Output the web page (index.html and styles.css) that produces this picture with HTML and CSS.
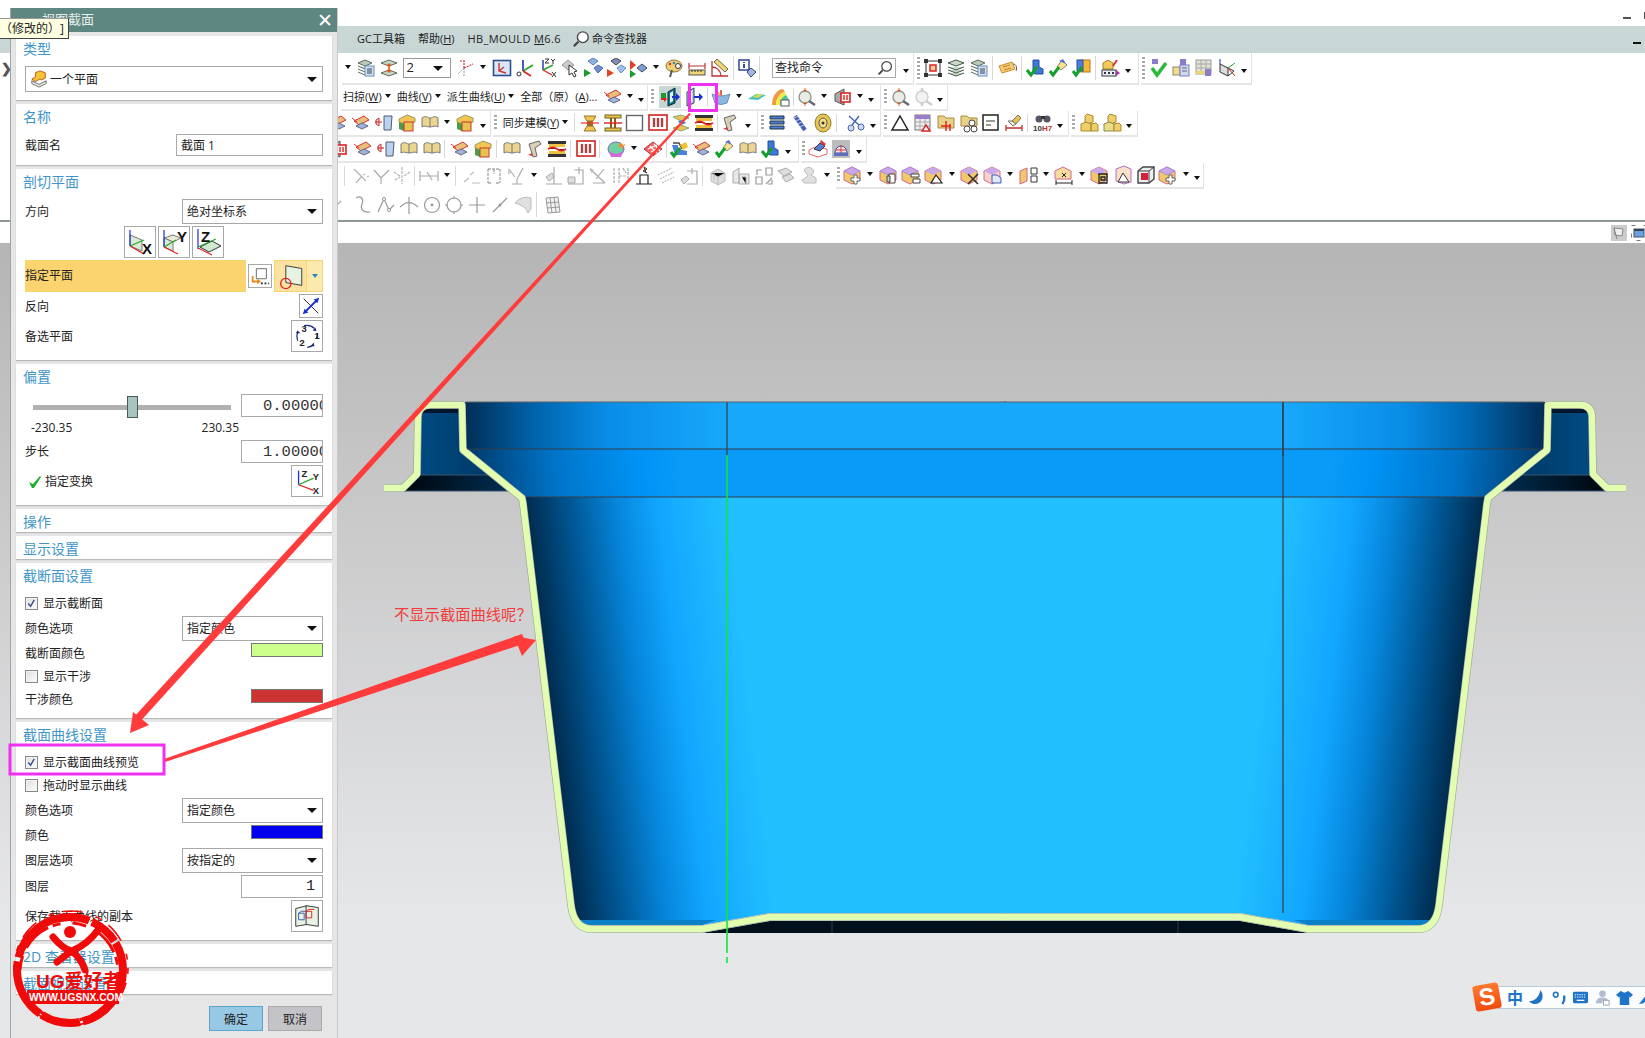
FILE: index.html
```html
<!DOCTYPE html>
<html lang="zh">
<head>
<meta charset="utf-8">
<title>视图截面</title>
<link rel="stylesheet" href="styles.css">
</head>
<body>
<svg class="defs" width="0" height="0">
<symbol id="ltab" viewBox="0 0 20 20"><path fill="#bccbb6" stroke="#5a6b60" d="M2 5l7-3 7 3-7 3zM2 8l7 3 2-1M2 11l7 3M2 14l7 3"/><rect x="9" y="8" width="9" height="10" fill="#d3e2f6" stroke="#6c8cb4"/><path stroke="#345" d="M11 11h5M11 13h5M11 15h5"/></symbol>
<symbol id="lyr" viewBox="0 0 20 20"><path fill="#c5d8c0" stroke="#5a6b60" d="M2 5l8-3 8 3-8 3zM2 15l8-3 8 3-8 3z"/><path stroke="#e2571e" stroke-width="1.5" fill="none" d="M10 6v8M8 8l2-2 2 2M8 12l2 2 2-2"/></symbol>
<symbol id="csd" viewBox="0 0 20 20"><path fill="none" stroke="#999" stroke-dasharray="2 1" d="M8 10v8M8 10l-6 6"/><path fill="none" stroke="#c33" stroke-dasharray="2 1" stroke-width="1.2" d="M8 10V3M8 10l9-4M4 3h5"/></symbol>
<symbol id="csf" viewBox="0 0 20 20"><rect x="1.5" y="2.5" width="17" height="15" fill="#dbe7f6" stroke="#2a4f8f" stroke-width="1.6"/><path fill="none" stroke="#c33" stroke-width="1.4" d="M7 5v8l7 2M7 13l5-4"/></symbol>
<symbol id="csg" viewBox="0 0 20 20"><path fill="none" stroke-width="1.6" stroke="#1a2fb0" d="M8 13V2"/><path fill="none" stroke-width="1.6" stroke="#2aa52a" d="M8 13l10-6"/><path fill="none" stroke-width="1.6" stroke="#d22" d="M8 13l8 5"/><circle cx="4" cy="16" r="2" fill="none" stroke="#333"/></symbol>
<symbol id="csx" viewBox="0 0 20 20"><path fill="none" stroke-width="1.4" stroke="#1a2fb0" d="M6 12V2"/><path fill="none" stroke-width="1.4" stroke="#2aa52a" d="M6 12l10-5"/><path fill="none" stroke-width="1.4" stroke="#d22" d="M6 12l9 5"/><path fill="none" stroke="#333" d="M8 1h4l-4 4h4M14 1l2 2 2-2M16 3v3M15 14l4 5M19 14l-4 5"/></symbol>
<symbol id="cur" viewBox="0 0 20 20"><path fill="#c8c8c8" stroke="#999" d="M2 7l6-5 6 5-6 5z"/><path fill="#fff" stroke="#333" d="M9 7l8 6-3 1 2 4-2 1-2-4-3 2z"/></symbol>
<symbol id="dg" viewBox="0 0 20 20"><path fill="#8fb0e0" stroke="#5b7fb8" d="M5 3l5-3 5 3-5 4z"/><path fill="#6f8fcc" stroke="#4b6ea8" d="M11 10l4-3 5 3-5 5z"/><path fill="#1f9b2e" d="M1 11l7 4-7 4z"/></symbol>
<symbol id="dr" viewBox="0 0 20 20"><path fill="#7f8fc0" stroke="#444" d="M5 3l5-3 5 3-5 4z"/><path fill="#9fc0ee" stroke="#6b8fc8" d="M11 10l4-3 5 3-5 5z"/><path fill="#d42" d="M1 11l7 4-7 4z"/></symbol>
<symbol id="drg" viewBox="0 0 20 20"><path fill="#d42" d="M2 2l6 5-6 5z"/><path fill="#1f9b2e" d="M2 12l6 4-6 4z"/><path fill="#7f9fd8" stroke="#445" d="M9 10l5-4 5 4-5 4z"/></symbol>
<symbol id="pal" viewBox="0 0 20 20"><ellipse cx="10" cy="8" rx="8" ry="6" fill="#eed070" stroke="#8a7a3a"/><circle cx="14" cy="8" r="2.5" fill="#fff" stroke="#335"/><path stroke="#5a5a5a" stroke-width="2" d="M8 12l-2 7"/><circle cx="6" cy="6" r="1.3" fill="#d33"/><circle cx="10" cy="5" r="1.3" fill="#38c"/></symbol>
<symbol id="rul" viewBox="0 0 20 20"><path fill="none" stroke="#b33" stroke-width="1.2" d="M2 5v6M18 5v6M2 8h16"/><rect x="2" y="12" width="16" height="5" fill="#f2d672" stroke="#555"/><path stroke="#333" d="M5 12v2M8 12v2M11 12v2M14 12v2"/></symbol>
<symbol id="ang" viewBox="0 0 20 20"><path fill="none" stroke="#b33" stroke-width="1.3" d="M2 3v15h16M2 9a9 9 0 0 1 9 9"/><path fill="#f2d672" stroke="#665" d="M7 1l11 10-3 3L4 4z"/></symbol>
<symbol id="inf" viewBox="0 0 20 20"><rect x="2" y="2" width="10" height="10" fill="#fff" stroke="#233a80" stroke-width="1.4"/><path stroke="#233a80" stroke-width="1.8" d="M7 4v1M7 6v4"/><path fill="#9db7e6" stroke="#446" d="M10 14l4-4 5 4-5 5z"/></symbol>
<symbol id="frm" viewBox="0 0 20 20"><path fill="none" stroke="#333" d="M3 3h14v14H3z"/><rect x="1" y="1" width="4" height="4" fill="#333"/><rect x="15" y="1" width="4" height="4" fill="#333"/><rect x="1" y="15" width="4" height="4" fill="#333"/><rect x="15" y="15" width="4" height="4" fill="#333"/><rect x="7" y="7" width="6" height="6" fill="#f6cf9a" stroke="#d22" stroke-width="1.5"/></symbol>
<symbol id="lyg" viewBox="0 0 20 20"><path fill="#cdd8c8" stroke="#3f5a45" d="M2 5l8-3 8 3-8 3zM2 9l8 3 8-3M2 12l8 3 8-3M2 15l8 3 8-3"/></symbol>
<symbol id="tag" viewBox="0 0 20 20"><path fill="#f4cd74" stroke="#d08a2a" d="M1 8l13-4 3 7-13 4z"/><path stroke="#c07a20" d="M5 9l7-2M6 12l7-2"/><path fill="none" stroke="#555" d="M15 6c4 0 4 5 3 7"/></symbol>
<symbol id="ck1" viewBox="0 0 20 20"><path fill="#3f78d8" stroke="#234f9c" d="M7 2h6v7l4 2v5H9L7 14z"/><path fill="none" stroke="#14a02c" stroke-width="3" d="M1 12l4 5 6-8"/></symbol>
<symbol id="ck2" viewBox="0 0 20 20"><path fill="#f7e189" stroke="#887" d="M8 9l5-7 5 5-6 5z"/><path fill="#5a6fd0" d="M10 3l4-2 3 5z"/><path fill="none" stroke="#14a02c" stroke-width="3" d="M1 13l3 4 6-8"/></symbol>
<symbol id="ck3" viewBox="0 0 20 20"><rect x="9" y="2" width="9" height="12" fill="#f6b83a" stroke="#b67a16"/><rect x="5" y="2" width="6" height="11" fill="#4f7fdc" stroke="#2b4f96"/><path fill="none" stroke="#14a02c" stroke-width="3" d="M1 13l3 4 6-8"/></symbol>
<symbol id="cbp" viewBox="0 0 20 20"><path fill="#f0c85c" stroke="#a8812a" d="M2 5l5-3 5 3v6H2z"/><rect x="1" y="12" width="14" height="6" fill="#eee" stroke="#334"/><path stroke="#334" stroke-width="2" d="M3 15h2M7 15h2M11 15h2"/><path fill="#a535b5" d="M15 12l4 3-4 3z"/><path stroke="#d33" stroke-width="2" d="M16 2l-4 6"/></symbol>
<symbol id="chk" viewBox="0 0 20 20"><path fill="none" stroke="#2cb83a" stroke-width="3.6" d="M3 10l5 7 9-12"/><rect x="3" y="1" width="6" height="5" fill="#8a7cc8"/></symbol>
<symbol id="tb2" viewBox="0 0 20 20"><rect x="2" y="9" width="7" height="8" fill="#f3dd8a" stroke="#887"/><rect x="9" y="7" width="9" height="11" fill="#cfd8f0" stroke="#7a7cc0"/><rect x="9" y="1" width="6" height="6" fill="#8a7cc8"/><path stroke="#667" d="M11 10h5M11 13h5"/></symbol>
<symbol id="tb3" viewBox="0 0 20 20"><rect x="2" y="2" width="15" height="14" fill="#e3e3d4" stroke="#999"/><path stroke="#aaa" d="M2 6h15M2 10h15M7 2v14M12 2v14"/><rect x="2" y="13" width="15" height="3" fill="#ecd56e"/><rect x="11" y="11" width="6" height="7" fill="#8a7cc8"/></symbol>
<symbol id="csb" viewBox="0 0 20 20"><path fill="#ddd" stroke="#333" d="M3 6l8 4v8l-8-4z"/><path fill="none" stroke="#333" d="M11 10l6 3-6 5"/><path stroke="#1a2fb0" d="M3 6V1"/><path stroke="#2aa52a" d="M11 10l7-5"/><path stroke="#d22" d="M11 10l7 8"/></symbol>
<symbol id="ins" viewBox="0 0 20 20"><path fill="#0a7a8e" stroke="#123" d="M8 5l7-4v15l-7 3z"/><path fill="#e8f0f6" d="M10 6l3-2v10l-3 2z"/><path fill="#d22" d="M1 11h3v-2l3 3-3 3v-2H1z"/><path fill="#1d9b2a" d="M1 6h5v5H1z"/><path fill="#1a2fd0" d="M12 9h4V6l4 4-4 4v-3h-4z"/></symbol>
<symbol id="ins2" viewBox="0 0 20 20"><path fill="#b6d2ea" stroke="#345" d="M3 5l7-4v15l-7 3z"/><path fill="#f4f8fb" d="M5 6l3-2v10l-3 2z"/><path fill="#1a2fd0" d="M10 9h5V6l4 4-4 4v-3h-5z"/></symbol>
<symbol id="bwl" viewBox="0 0 20 20"><path fill="#8ab8e0" stroke="#6a90b8" d="M1 7q9 4 18 0l-3 9q-6 3-12 0z"/><path fill="#d66" d="M9 3h2v6H9z"/><path fill="#f0a040" d="M5 5h3l2 5z"/></symbol>
<symbol id="srf" viewBox="0 0 20 20"><path fill="#3ec0c8" d="M1 12l8-5 10 1-8 5z"/><path fill="#b8e050" d="M5 10l6-3 5 1-6 3z"/><path fill="#f2d64a" d="M8 10l4-2 3 .5-4 2z"/></symbol>
<symbol id="rnb" viewBox="0 0 20 20"><path fill="#e94" d="M2 18C2 8 8 2 13 2l2 3C10 6 6 12 6 18z"/><path fill="#ee4" d="M6 18c0-6 4-12 9-13l1 3c-3 1-6 5-6 10z"/><path fill="#4c8" d="M10 18c0-5 3-9 6-10l2 3c-2 1-4 4-4 7z"/><path fill="#59d" d="M14 18c0-3 2-6 4-7l1 3v4z"/><rect x="11" y="13" width="8" height="6" fill="#fff" stroke="#556"/></symbol>
<symbol id="mag" viewBox="0 0 20 20"><circle cx="9" cy="10" r="6" fill="#e8ece4" stroke="#8c9a8c" stroke-width="1.4"/><path stroke="#667" stroke-width="2.4" d="M13 14l6 4"/><path stroke="#e2571e" d="M9 1v3M9 16v3"/><path fill="#e2571e" d="M7 3h4l-2 2zM7 17h4l-2-2z"/></symbol>
<symbol id="magg" viewBox="0 0 20 20"><circle cx="9" cy="10" r="6" fill="#f2f2f2" stroke="#ccc" stroke-width="1.4"/><path stroke="#ccc" stroke-width="2.4" d="M13 14l6 4M9 1v3M9 16v3"/></symbol>
<symbol id="clp" viewBox="0 0 20 20"><path fill="#aaa" stroke="#555" d="M3 7l9-5v16l-9-4z"/><rect x="9" y="6" width="9" height="9" fill="#fff" stroke="#d22" stroke-width="1.6"/><path stroke="#d22" stroke-width="1.4" d="M12 8v5M15 8v5"/></symbol>
<symbol id="prt" viewBox="0 0 20 20"><path fill="#eac07a" stroke="#c33" d="M3 8l10-5 5 4-10 5z"/><path fill="#9fb5d8" stroke="#668" d="M5 13l6-3 6 3-6 3z"/><path stroke="#e33" d="M1 5l5 4"/></symbol>
<symbol id="fit" viewBox="0 0 20 20"><path fill="#ddd" stroke="#c33" d="M2 7l3-2v8l-3-2z"/><path stroke="#d33" stroke-width="1.2" d="M1 9h7"/><path fill="#b7d3ee" stroke="#557" d="M10 3h8l-1 14h-7z"/></symbol>
<symbol id="wrp" viewBox="0 0 20 20"><path fill="#ecd58f" stroke="#777" d="M2 5c4-3 6 0 8 0s5-3 8 0v9c-3-2-5 0-8 0s-5-2-8 0z"/><path stroke="#777" d="M10 5v9"/></symbol>
<symbol id="box" viewBox="0 0 20 20"><path fill="#f2c552" stroke="#996" d="M2 6l8-4 8 3v4l-8 3-8-3z"/><path fill="#4a9c4a" d="M2 9l5 2v7l-5-2z"/><rect x="7" y="9" width="9" height="9" fill="#e7c34f" stroke="#c33"/></symbol>
<symbol id="ywa" viewBox="0 0 20 20"><path fill="#f2c552" stroke="#96762a" d="M4 3h12l-3 5H7zM7 13h6l3 5H4z"/><path fill="#9a6c20" d="M7 8h6v5H7z"/><path stroke="#e33" stroke-width="1.2" d="M1 10h18"/></symbol>
<symbol id="ywb" viewBox="0 0 20 20"><rect x="2" y="2" width="16" height="3" fill="#f0c040" stroke="#663"/><rect x="2" y="15" width="16" height="3" fill="#f0c040" stroke="#663"/><path stroke="#8a5a16" stroke-width="2" d="M8 5v10M12 5v10"/><path stroke="#d22" stroke-width="1.4" d="M1 10h18"/></symbol>
<symbol id="wsq" viewBox="0 0 20 20"><rect x="1.5" y="2.5" width="16" height="15" fill="#fff" stroke="#666" stroke-width="1.4"/></symbol>
<symbol id="rbb" viewBox="0 0 20 20"><rect x="1" y="2" width="18" height="15" fill="#fff" stroke="#c22" stroke-width="1.6"/><path stroke="#a44" stroke-width="2.4" d="M6 5v9M10 5v9M14 5v9"/></symbol>
<symbol id="ywc" viewBox="0 0 20 20"><path fill="#e8c252" stroke="#8a7" d="M2 4l8-2 8 3-8 3zM2 15l8-3 8 3-8 3z"/><path fill="#3b7fd0" d="M7 8l5-1 3 3-5 2z"/></symbol>
<symbol id="ywd" viewBox="0 0 20 20"><path fill="#333" d="M1 2h18v3H1zM1 15h18v3H1z"/><path fill="#f0c040" d="M2 5h16v3H2zM2 12h16v3H2z"/><path stroke="#d22" stroke-width="2" d="M1 10q5-3 9 0t9 0"/></symbol>
<symbol id="scr" viewBox="0 0 20 20"><path fill="#d8d0b0" stroke="#667" d="M4 5l10-3 2 3-6 4 2 8-4 1z"/><path fill="#d33" d="M3 16l4-2 1 3z"/></symbol>
<symbol id="stk" viewBox="0 0 20 20"><path fill="#4f7cd4" stroke="#234" d="M3 3h14v3H3zM3 8h14v3H3zM3 13h14v3H3z"/></symbol>
<symbol id="spg" viewBox="0 0 20 20"><path stroke="#3f5fb8" stroke-width="4" d="M5 3l10 14"/><path stroke="#ccd" d="M4 5l4-2M6 8l4-2M8 11l4-2M10 14l4-2"/></symbol>
<symbol id="cil" viewBox="0 0 20 20"><ellipse cx="10" cy="10" rx="8" ry="9" fill="#e8c552" stroke="#8a7a2a"/><ellipse cx="10" cy="10" rx="4" ry="5" fill="#f4e08a" stroke="#555"/><circle cx="10" cy="10" r="1.5" fill="#333"/></symbol>
<symbol id="scs" viewBox="0 0 20 20"><path fill="none" stroke="#4a68b8" stroke-width="1.5" d="M3 3l10 9M13 3L6 12"/><circle cx="5" cy="15" r="3" fill="#cfd8f0" stroke="#4a68b8"/><circle cx="15" cy="14" r="3" fill="#cfd8f0" stroke="#4a68b8"/></symbol>
<symbol id="tri" viewBox="0 0 20 20"><path fill="#fff" stroke="#222" stroke-width="1.5" d="M10 3l8 14H2z"/></symbol>
<symbol id="tbr" viewBox="0 0 20 20"><rect x="2" y="2" width="15" height="15" fill="#eee" stroke="#777"/><rect x="2" y="2" width="15" height="4" fill="#9a7cc8"/><path stroke="#aaa" d="M2 9h15M2 13h15M7 6v11M12 6v11"/><path fill="#fff" stroke="#d22" stroke-width="1.4" d="M13 12l4 6H9z"/></symbol>
<symbol id="fld" viewBox="0 0 20 20"><path fill="#e8d088" stroke="#a68a3a" d="M2 3h6l2 2h8v10H2z"/><path stroke="#d22" stroke-width="1.4" d="M10 8v10M5 13h10M14 11v7"/></symbol>
<symbol id="flc" viewBox="0 0 20 20"><path fill="#e8d088" stroke="#a68a3a" d="M2 3h6l2 2h8v8H2z"/><circle cx="13" cy="10" r="3" fill="#fff" stroke="#444"/><circle cx="8" cy="16" r="3" fill="#fff" stroke="#444"/><circle cx="15" cy="16" r="3" fill="#fff" stroke="#444"/></symbol>
<symbol id="not" viewBox="0 0 20 20"><rect x="2" y="2" width="15" height="15" fill="#fff" stroke="#222" stroke-width="1.5"/><path stroke="#333" d="M5 8h9M5 12h5"/></symbol>
<symbol id="bru" viewBox="0 0 20 20"><path fill="#e8c050" stroke="#776" d="M8 8l6-6 3 3-5 6z"/><path fill="#eed" stroke="#776" d="M4 8l4 0 4 3-3 2z"/><path stroke="#b33" stroke-width="1.3" d="M2 12v6M18 12v6M2 15h16"/></symbol>
<symbol id="bin" viewBox="0 0 20 20"><circle cx="6" cy="6" r="3.5" fill="#556"/><circle cx="14" cy="6" r="3.5" fill="#556"/><rect x="8" y="3" width="4" height="3" fill="#333"/><text x="0" y="18" class="svt" fill="#333">10<tspan fill="#b33">H7</tspan></text></symbol>
<symbol id="cby" viewBox="0 0 20 20"><path fill="#f0cf6a" stroke="#a88a30" d="M8 1l6 2v6l-6 2-2-2V3z"/><path fill="#f0cf6a" stroke="#a88a30" d="M2 11l5-2 5 2v7H2zM12 11l5-1 2 2v6h-7z"/></symbol>
<symbol id="cbg" viewBox="0 0 20 20"><path fill="#f0cf6a" stroke="#a88a30" d="M8 1l6 2v6l-6 2-2-2V3z"/><path fill="#eadd8a" stroke="#8a8a40" d="M2 11l5-2 5 2v7H2z"/><path fill="#f0cf6a" stroke="#a88a30" d="M12 11l5-1 2 2v6h-7z"/></symbol>
<symbol id="hom" viewBox="0 0 20 20"><rect x="1" y="1" width="18" height="18" fill="#bcbcbc"/><path fill="#f4e6ea" stroke="#3a4f9c" d="M4 14a6 7 0 0 1 12 0z"/><path stroke="#d33" d="M10 6v8M5 11h10"/><rect x="3" y="14" width="14" height="3" fill="#5a6fc0"/></symbol>
<symbol id="prn" viewBox="0 0 20 20"><path fill="#fff" stroke="#e66" d="M1 11l6-3 12 2v5l-9 3-9-3z"/><path fill="#5a7cd0" stroke="#334" d="M6 10l6-6 5 3-5 5z"/><path fill="#d33" d="M13 1l5 4-2 2-4-4z"/></symbol>
<symbol id="bce" viewBox="0 0 20 20"><path fill="#4a80e0" d="M2 6h6v4l9 2v4H5z"/><path fill="none" stroke="#444" stroke-width="1.4" d="M3 4l6 0 3 6"/><path fill="#f5c030" d="M10 6l6-3 2 5-5 3z"/><path fill="none" stroke="#14a02c" stroke-width="3" d="M1 13l3 4 6-8"/></symbol>
<symbol id="glb" viewBox="0 0 20 20"><ellipse cx="9" cy="10" rx="8" ry="7" fill="#6fd1a2" stroke="#7a6ab8"/><path fill="#d06ad8" d="M2 12q7 6 14 0l-2 6H4z"/><path fill="#f09030" d="M13 3l3 3 3-1-3 3v3l-2-3h-3z"/></symbol>
<symbol id="dia" viewBox="0 0 20 20"><path fill="#e66" stroke="#b33" d="M1 10l9-7 9 7-9 7z"/><path stroke="#fff" stroke-width="1.3" d="M5 10l9-4M8 13l8-4M7 7l7 7M11 5l6 7"/></symbol>
<symbol id="g1" viewBox="0 0 20 20"><path fill="none" stroke="#b4b4b4" stroke-width="1.2" d="M2 3l12 12M4 17l6-7M11 9l2-1M15 11l2-1"/></symbol>
<symbol id="g2" viewBox="0 0 20 20"><path fill="none" stroke="#aaa" stroke-width="1.2" d="M2 4l7 8 8-8M9 12v6"/></symbol>
<symbol id="g3" viewBox="0 0 20 20"><path fill="none" stroke="#b4b4b4" stroke-width="1.2" d="M10 1v17M2 6l6 4M18 6l-6 4M3 14l5-3" stroke-dasharray="3 1"/></symbol>
<symbol id="g4" viewBox="0 0 20 20"><path fill="none" stroke="#aaa" stroke-width="1.2" d="M1 5v10M19 5v10M1 10h18M8 6l5 8"/></symbol>
<symbol id="g5" viewBox="0 0 20 20"><path fill="none" stroke="#bbb" stroke-width="1.2" d="M3 16l5-4M9 9l4-3M11 17h8"/></symbol>
<symbol id="g6" viewBox="0 0 20 20"><path fill="none" stroke="#aaa" stroke-width="1.4" d="M4 3h12M4 3v14M16 3v14M10 3v5M4 17h4M12 17h4" stroke-dasharray="3 1"/></symbol>
<symbol id="g7" viewBox="0 0 20 20"><path fill="none" stroke="#aaa" stroke-width="1.2" d="M2 3l6 8M16 2l-6 11M10 13v5M5 18h10"/><path fill="#ccc" d="M1 3l4 3-4 3z"/></symbol>
<symbol id="g8" viewBox="0 0 20 20"><path fill="#ddd" stroke="#aaa" d="M3 11l6-4 2 4-5 4z"/><path fill="none" stroke="#aaa" stroke-width="1.2" d="M11 1v17M3 18h16"/></symbol>
<symbol id="g9" viewBox="0 0 20 20"><path fill="#ddd" stroke="#aaa" d="M3 11h7v6H3z"/><path fill="none" stroke="#aaa" stroke-width="1.2" d="M9 4h9v14H3M14 1v7"/></symbol>
<symbol id="g10" viewBox="0 0 20 20"><path fill="none" stroke="#aaa" stroke-width="1.2" d="M2 3l15 14M16 3L8 13M5 17h12"/><path fill="#bbb" d="M2 2l4 2-3 3z"/></symbol>
<symbol id="g11" viewBox="0 0 20 20"><path fill="none" stroke="#aaa" stroke-width="1.2" d="M3 2v16M17 2v16M8 2v16M12 2l3 5M8 10h7" stroke-dasharray="3 1"/></symbol>
<symbol id="g12" viewBox="0 0 20 20"><path fill="none" stroke="#222" stroke-width="1.2" d="M2 18h16M6 18V9h8v9"/><path fill="#e8d020" stroke="#333" d="M10 1l3 2-2 2 2 2-4-2 2-1z"/></symbol>
<symbol id="g13" viewBox="0 0 20 20"><path fill="none" stroke="#bbb" stroke-width="1.2" d="M2 9l14-7M4 13l14-7M6 17l12-6" stroke-dasharray="2 1"/></symbol>
<symbol id="g14" viewBox="0 0 20 20"><path fill="#ddd" stroke="#aaa" d="M2 14l5-4 3 3-5 5z"/><path fill="none" stroke="#aaa" stroke-width="1.2" d="M8 5h10v13H8M13 2v6"/></symbol>
<symbol id="g15" viewBox="0 0 20 20"><path fill="#ddd" stroke="#bbb" d="M3 7l7-4 7 4v8l-7 4-7-4z"/><path stroke="#bbb" d="M3 7l7 4 7-4M10 11v8M6 5v9"/></symbol>
<symbol id="g16" viewBox="0 0 20 20"><path fill="#e8e8e8" stroke="#aaa" d="M2 17V6l6-4v15zM8 8h10v10H8z"/><path stroke="#aaa" d="M11 11h4v7"/></symbol>
<symbol id="g17" viewBox="0 0 20 20"><path fill="none" stroke="#999" stroke-width="1.2" d="M2 11h6v7H2zM12 2h6v7h-6zM12 18l6-6M14 18h4v-4M8 4H3v5"/></symbol>
<symbol id="g18" viewBox="0 0 20 20"><path fill="#ddd" stroke="#aaa" d="M2 5l8-3 6 4-8 4zM6 11l8-3 4 4-8 4z"/></symbol>
<symbol id="g19" viewBox="0 0 20 20"><path fill="#e0e0e0" stroke="#bbb" d="M5 4a5 4 0 1 1 7 5l5 3v5H5l-2-3 6-4z"/></symbol>
<symbol id="h1" viewBox="0 0 20 20"><path fill="none" stroke="#aaa" stroke-width="1.2" d="M1 18l12-12"/></symbol>
<symbol id="h2" viewBox="0 0 20 20"><path fill="none" stroke="#999" stroke-width="1.2" d="M3 3c5-3 8 1 6 6s1 9 8 8"/></symbol>
<symbol id="h3" viewBox="0 0 20 20"><path fill="none" stroke="#999" stroke-width="1.2" d="M2 17L8 4l5 11 5-5"/><circle cx="8" cy="4" r="1.6" fill="#fff" stroke="#999"/><circle cx="13" cy="15" r="1.6" fill="#fff" stroke="#999"/></symbol>
<symbol id="h4" viewBox="0 0 20 20"><path fill="none" stroke="#999" stroke-width="1.2" d="M1 12q9-9 18 0M10 2v17"/></symbol>
<symbol id="h5" viewBox="0 0 20 20"><circle cx="10" cy="10" r="7.5" fill="none" stroke="#999" stroke-width="1.2"/><circle cx="10" cy="10" r="1.4" fill="#999"/></symbol>
<symbol id="h6" viewBox="0 0 20 20"><circle cx="10" cy="10" r="7" fill="none" stroke="#999" stroke-width="1.2"/><path stroke="#999" d="M10 1v3M10 16v3M1 10h3M16 10h3"/></symbol>
<symbol id="h7" viewBox="0 0 20 20"><path stroke="#999" stroke-width="1.2" d="M10 2v16M2 10h16"/></symbol>
<symbol id="h8" viewBox="0 0 20 20"><path stroke="#999" stroke-width="1.2" d="M3 17L17 3"/><circle cx="10" cy="10" r="1.5" fill="#999"/></symbol>
<symbol id="h9" viewBox="0 0 20 20"><path fill="#e0e0e0" stroke="#bbb" d="M2 8q7-8 16-5v11l-3 4q-2-7-13-10z"/></symbol>
<symbol id="h10" viewBox="0 0 20 20"><path fill="#f2f2f2" stroke="#999" d="M3 3l12-1 2 15-12 1z"/><path stroke="#999" d="M7 3l2 15M11 2l2 15M3 8l13-1M4 13l13-1"/></symbol>
<symbol id="p1" viewBox="0 0 20 20"><path fill="#f2c96a" stroke="#d3668a" d="M1 6l8-4 8 4v9l-8 4-8-4z"/><path fill="#c9a8e8" stroke="#b08ad8" d="M1 6l8-4 8 4-8 4z"/><path fill="#fff" stroke="#666" d="M8 13h3v-3h3v3h3v3h-3v3h-3v-3H8z"/></symbol>
<symbol id="p2" viewBox="0 0 20 20"><path fill="#f2c96a" stroke="#d3668a" d="M1 6l8-4 8 4v9l-8 4-8-4z"/><path fill="#c9a8e8" stroke="#b08ad8" d="M1 6l8-4 8 4-8 4z"/><path fill="#fff" stroke="#444" d="M10 9h6v9h-6z"/><path fill="#ccc" stroke="#444" d="M8 11h3v6H8z"/></symbol>
<symbol id="p3" viewBox="0 0 20 20"><path fill="#f2c96a" stroke="#d3668a" d="M1 6l8-4 8 4v9l-8 4-8-4z"/><path fill="#c9a8e8" stroke="#b08ad8" d="M1 6l8-4 8 4-8 4z"/><path fill="#fff" stroke="#444" d="M10 9h8v3h-8zM12 14h7v4h-7z"/></symbol>
<symbol id="p4" viewBox="0 0 20 20"><path fill="#f2c96a" stroke="#d3668a" d="M1 6l8-4 8 4v9l-8 4-8-4z"/><path fill="#c9a8e8" d="M1 6l8-4 8 4-8 4z"/><path fill="#fff" stroke="#222" stroke-width="1.2" d="M12 10l6 8H7z"/></symbol>
<symbol id="p5" viewBox="0 0 20 20"><path fill="#f2c96a" stroke="#d3668a" d="M1 6l8-4 8 4v9l-8 4-8-4z"/><path fill="#c9a8e8" d="M1 6l8-4 8 4-8 4z"/><path stroke="#333" stroke-width="1.6" d="M8 9l10 10M18 9L8 19"/></symbol>
<symbol id="p6" viewBox="0 0 20 20"><path fill="#fbd4c8" stroke="#d3668a" d="M1 6l8-4 8 4v9l-8 4-8-4z"/><path fill="#c9a8e8" d="M1 6l8-4 8 4-8 4z"/><path fill="#dfe8f8" stroke="#3a5ab8" d="M9 10h5l4 3v5H9z"/></symbol>
<symbol id="p7" viewBox="0 0 20 20"><path fill="#f2c96a" stroke="#d3668a" d="M1 6l7-3v13l-7 3z"/><path fill="#fff" stroke="#333" d="M12 3h6v6h-6zM12 11h6v6h-6z"/></symbol>
<symbol id="p8" viewBox="0 0 20 20"><path fill="#f7dc9e" stroke="#d3668a" d="M1 6l8-4 8 4v8H1z"/><path stroke="#222" d="M2 18h16M2 15v6M18 15v6M8 8l4 4M12 8l-4 4"/></symbol>
<symbol id="p9" viewBox="0 0 20 20"><path fill="#f2c96a" stroke="#d3668a" d="M1 6l8-4 8 4v9l-8 4-8-4z"/><path fill="#c9a8e8" d="M1 6l8-4 8 4-8 4z"/><path fill="none" stroke="#222" stroke-width="1.3" d="M9 9h8v9H9zM11 12h4v3h-4z"/></symbol>
<symbol id="p10" viewBox="0 0 20 20"><path fill="#f9e0c8" stroke="#b070c8" d="M3 4l8-3 7 3v13l-7 2-8-3z"/><path fill="#fff" stroke="#333" d="M10 8l6 9H5z"/></symbol>
<symbol id="p11" viewBox="0 0 20 20"><path fill="#eee" stroke="#444" stroke-width="1.4" d="M2 6l5-4h11v12l-5 4H2z"/><path fill="none" stroke="#444" d="M2 6h11v12M13 6l5-4"/><rect x="5" y="8" width="7" height="7" fill="#d8203a"/></symbol>
</svg>

<div class="app">
  <header class="titlebar"><span class="dash"></span><span class="edge"></span></header>
  <nav class="menubar">
    <span class="menu">GC工具箱</span><span class="menu">帮助(<u>H</u>)</span><span class="menu wide">HB_MOULD <u>M</u>6.6</span>
    <svg class="find" viewBox="0 0 20 20"><circle cx="12" cy="8" r="6" fill="#fff" stroke="#444" stroke-width="1.5"/><path stroke="#444" stroke-width="2.5" d="M7 13l-5 5"/></svg><span>命令查找器</span>
    <span class="menudash"></span>
  </nav>

  <section class="toolbars">
    <div class="row r32">
      <div class="lead"><span class="chev">❯</span></div>
      <div class="tb ml4"><span class="c"></span>
        <svg class="i"><use href="#ltab"/></svg><svg class="i"><use href="#lyr"/></svg>
        <div class="sel ml2"><span>2</span><span class="arrow"></span></div>
        <svg class="i ml4"><use href="#csd"/></svg><span class="c"></span>
        <svg class="i"><use href="#csf"/></svg><svg class="i"><use href="#csg"/></svg><svg class="i"><use href="#csx"/></svg><svg class="i"><use href="#cur"/></svg><svg class="i"><use href="#dg"/></svg><svg class="i"><use href="#dr"/></svg><svg class="i"><use href="#drg"/></svg><span class="c"></span>
        <svg class="i"><use href="#pal"/></svg><svg class="i"><use href="#rul"/></svg><svg class="i"><use href="#ang"/></svg><span class="s"></span>
        <svg class="i"><use href="#inf"/></svg><span class="s s14"></span>
        <div class="findbox"><span>查找命令</span><svg class="find2" viewBox="0 0 20 20"><circle cx="12" cy="8" r="6" fill="#fff" stroke="#444" stroke-width="1.5"/><path stroke="#444" stroke-width="2.5" d="M7 13l-5 5"/></svg></div>
        <span class="c ml4 down"></span></div>
      <div class="tb"><span class="g"></span>
        <svg class="i"><use href="#frm"/></svg><svg class="i"><use href="#lyg"/></svg><svg class="i"><use href="#ltab"/></svg><span class="s s6"></span>
        <svg class="i"><use href="#tag"/></svg><span class="s s6"></span>
        <svg class="i"><use href="#ck1"/></svg><svg class="i"><use href="#ck2"/></svg><svg class="i"><use href="#ck3"/></svg><span class="s s6"></span>
        <svg class="i"><use href="#cbp"/></svg><span class="c down pr3"></span></div>
      <div class="tb"><span class="g"></span>
        <svg class="i"><use href="#chk"/></svg><svg class="i"><use href="#tb2"/></svg><svg class="i"><use href="#tb3"/></svg><svg class="i"><use href="#csb"/></svg><span class="c down"></span></div>
    </div>

    <div class="row r26">
      <div class="lead"></div>
      <div class="tb ml3">
        <span class="tm">扫掠(<u>W</u>)</span><span class="c"></span><span class="tm">曲线(<u>V</u>)</span><span class="c"></span><span class="tm">派生曲线(<u>U</u>)</span><span class="c"></span><span class="tm">全部（原）(<u>A</u>)...</span>
        <svg class="i ml4"><use href="#prt"/></svg><span class="c"></span><span class="c c10 down"></span></div>
      <div class="tb"><span class="g"></span>
        <svg class="i on ml2"><use href="#ins"/></svg><svg class="i ml2"><use href="#ins2"/></svg><span class="s"></span>
        <svg class="i"><use href="#bwl"/></svg><span class="c"></span><svg class="i"><use href="#srf"/></svg><svg class="i"><use href="#rnb"/></svg><span class="s"></span>
        <svg class="i"><use href="#mag"/></svg><span class="c"></span><svg class="i"><use href="#clp"/></svg><span class="c"></span><span class="c c10 down pr3"></span></div>
      <div class="tb"><span class="g"></span>
        <svg class="i"><use href="#mag"/></svg><svg class="i"><use href="#magg"/></svg><span class="c down"></span></div>
    </div>

    <div class="row r26">
      <div class="lead"></div>
      <div class="tb mln">
        <svg class="i"><use href="#prt"/></svg><svg class="i"><use href="#prt"/></svg><svg class="i"><use href="#fit"/></svg><svg class="i"><use href="#box"/></svg><svg class="i"><use href="#wrp"/></svg><span class="c"></span><svg class="i"><use href="#box"/></svg><span class="c down"></span></div>
      <div class="tb"><span class="g"></span>
        <span class="tm noml">同步建模(<u>Y</u>)</span><span class="c"></span><span class="s"></span>
        <svg class="i ml2"><use href="#ywa"/></svg><svg class="i"><use href="#ywb"/></svg><svg class="i"><use href="#wsq"/></svg><svg class="i"><use href="#rbb"/></svg><svg class="i"><use href="#ywc"/></svg><svg class="i"><use href="#ywd"/></svg><span class="s"></span>
        <svg class="i"><use href="#scr"/></svg><span class="c down pr2"></span></div>
      <div class="tb"><span class="g"></span>
        <svg class="i"><use href="#stk"/></svg><svg class="i"><use href="#spg"/></svg><svg class="i"><use href="#cil"/></svg><span class="s"></span>
        <svg class="i ml6"><use href="#scs"/></svg><span class="c down"></span></div>
      <div class="tb"><span class="g"></span>
        <svg class="i"><use href="#tri"/></svg><svg class="i"><use href="#tbr"/></svg><svg class="i"><use href="#fld"/></svg><svg class="i"><use href="#flc"/></svg><svg class="i"><use href="#not"/></svg><svg class="i"><use href="#bru"/></svg><span class="s"></span>
        <svg class="i ml2"><use href="#bin"/></svg><span class="c down pr1"></span></div>
      <div class="tb"><span class="g"></span>
        <svg class="i"><use href="#cby"/></svg><svg class="i"><use href="#cbg"/></svg><span class="c down pr1"></span></div>
    </div>

    <div class="row r26">
      <div class="lead"></div>
      <div class="tb mln">
        <svg class="i"><use href="#clp"/></svg><svg class="i ml2"><use href="#prt"/></svg><svg class="i"><use href="#fit"/></svg><svg class="i"><use href="#wrp"/></svg><svg class="i"><use href="#wrp"/></svg><span class="s"></span>
        <svg class="i ml2"><use href="#prt"/></svg><svg class="i"><use href="#box"/></svg><span class="s"></span>
        <svg class="i ml2"><use href="#wrp"/></svg><svg class="i"><use href="#scr"/></svg><svg class="i"><use href="#ywd"/></svg><span class="s"></span>
        <svg class="i ml2"><use href="#rbb"/></svg><span class="s"></span>
        <svg class="i ml4"><use href="#glb"/></svg><span class="c"></span><svg class="i"><use href="#dia"/></svg><span class="s"></span>
        <svg class="i"><use href="#bce"/></svg><svg class="i"><use href="#prt"/></svg><svg class="i"><use href="#ck2"/></svg><svg class="i"><use href="#wrp"/></svg><svg class="i"><use href="#ck1"/></svg><span class="c down pr3"></span></div>
      <div class="tb"><span class="g"></span>
        <svg class="i"><use href="#prn"/></svg><svg class="i"><use href="#hom"/></svg><span class="c down"></span></div>
    </div>

    <div class="row r26">
      <div class="lead"></div>
      <div class="tb ml4 flat"><span class="s"></span>
        <svg class="i20 ml6"><use href="#g1"/></svg><svg class="i20"><use href="#g2"/></svg><svg class="i20"><use href="#g3"/></svg><span class="s ml2"></span>
        <svg class="i ml2"><use href="#g4"/></svg><span class="c"></span><span class="s"></span>
        <svg class="i ml2"><use href="#g5"/></svg><svg class="i"><use href="#g6"/></svg><svg class="i"><use href="#g7"/></svg><span class="c"></span>
        <svg class="i"><use href="#g8"/></svg><svg class="i"><use href="#g9"/></svg><svg class="i"><use href="#g10"/></svg><svg class="i"><use href="#g11"/></svg><svg class="i"><use href="#g12"/></svg><svg class="i"><use href="#g13"/></svg><svg class="i"><use href="#g14"/></svg><span class="s"></span>
        <svg class="i ml2"><use href="#g15"/></svg><svg class="i"><use href="#g16"/></svg><svg class="i"><use href="#g17"/></svg><svg class="i"><use href="#g18"/></svg><svg class="i"><use href="#g19"/></svg><span class="c"></span></div>
      <div class="tb"><span class="g"></span>
        <svg class="i"><use href="#p1"/></svg><span class="c"></span><svg class="i"><use href="#p2"/></svg><svg class="i"><use href="#p3"/></svg><svg class="i"><use href="#p4"/></svg><span class="c"></span>
        <svg class="i"><use href="#p5"/></svg><svg class="i"><use href="#p6"/></svg><span class="c"></span><svg class="i"><use href="#p7"/></svg><span class="c"></span><svg class="i"><use href="#p8"/></svg><span class="c"></span>
        <svg class="i"><use href="#p9"/></svg><svg class="i"><use href="#p10"/></svg><svg class="i"><use href="#p11"/></svg><svg class="i"><use href="#p1"/></svg><span class="c"></span><span class="c c10 down"></span></div>
    </div>

    <div class="row r31">
      <div class="lead"></div>
      <div class="tb mln flat">
        <svg class="i"><use href="#h1"/></svg><svg class="i ml2"><use href="#h2"/></svg><svg class="i"><use href="#h3"/></svg><svg class="i"><use href="#h4"/></svg><svg class="i"><use href="#h5"/></svg><svg class="i"><use href="#h6"/></svg><svg class="i"><use href="#h7"/></svg><svg class="i"><use href="#h8"/></svg><svg class="i"><use href="#h9"/></svg><span class="s"></span>
        <svg class="i ml4"><use href="#h10"/></svg></div>
    </div>
  </section>

  <div class="rule"></div>
  <div class="viewbar">
    <svg class="vi" viewBox="0 0 16 16"><rect width="16" height="16" fill="#ccc"/><path fill="#f0f0f0" stroke="#888" d="M3 3l9 1-1 7-7-1zM3 3l3 11"/></svg>
    <svg class="vi" viewBox="0 0 16 16"><path fill="none" stroke="#777" stroke-dasharray="4 8" d="M.5.5h15v15H.5z"/><rect x="3" y="4" width="10" height="8" fill="#6a9fe0" stroke="#456"/><rect x="3" y="4" width="10" height="2" fill="#345"/></svg>
  </div>

  <main class="viewport">
    <svg class="model" viewBox="0 243 1645 795" width="1645" height="795">
      <defs>
        <linearGradient id="ga" gradientUnits="userSpaceOnUse" x1="465" y1="0" x2="727" y2="0"><stop offset="0" stop-color="#022d55"/><stop offset=".28" stop-color="#0066b0"/><stop offset=".55" stop-color="#0a8ee8"/><stop offset="1" stop-color="#17a8fc"/></linearGradient>
        <linearGradient id="gb" gradientUnits="userSpaceOnUse" x1="470" y1="470" x2="680" y2="450"><stop offset="0" stop-color="#013a6c"/><stop offset=".4" stop-color="#0074c8"/><stop offset=".8" stop-color="#0093f5"/><stop offset="1" stop-color="#0a9bf8"/></linearGradient>
        <linearGradient id="gc" gradientUnits="userSpaceOnUse" x1="525" y1="497" x2="725" y2="473"><stop offset="0" stop-color="#012b4e"/><stop offset=".2" stop-color="#00538e"/><stop offset=".45" stop-color="#0686dc"/><stop offset=".65" stop-color="#12a6ff"/><stop offset="1" stop-color="#22bfff"/></linearGradient>
        <linearGradient id="gp" gradientUnits="userSpaceOnUse" x1="420" y1="0" x2="490" y2="0"><stop offset="0" stop-color="#004a80"/><stop offset="1" stop-color="#003a68"/></linearGradient>
        <linearGradient id="gd" gradientUnits="userSpaceOnUse" x1="404" y1="0" x2="510" y2="0"><stop offset="0" stop-color="#00060c"/><stop offset="1" stop-color="#012e52"/></linearGradient>
        <g id="half">
          <path fill="url(#gp)" d="M419 407H464V451L490 475H418Z"/>
          <path fill="#01162c" d="M420 407H462V413H420Z"/>
          <path fill="url(#gd)" d="M404 491L418 475H489L511 491Z"/>
          <path fill="none" stroke="#3a5570" d="M418 475H488M404 491H511"/>
          <path fill="url(#ga)" d="M465 402H1006V449H465Z"/>
          <path fill="url(#gb)" d="M463 449H1006V497H522Z"/>
          <path fill="url(#gc)" d="M523 497H1006V913H770L702 925H586Q576 925 574 918Z"/>
          <path fill="#0b7fc8" d="M578 920H716L702 925H586Z"/>
          <path fill="#01101a" d="M702 933L770 921H1006V933Z"/>
          <path stroke="#333a40" d="M832 921V933"/>
          <path fill="none" stroke="#9aa3a0" stroke-width="7.6" stroke-linejoin="round" d="M384 488H403L417 474L418 416Q419 405 430 405H462L463 450L522 498L523 503L571 905Q574 929 592 929H702L770 917H1006"/>
          <path fill="none" stroke="#e2fcb0" stroke-width="6.4" stroke-linejoin="round" d="M384 488H403L417 474L418 416Q419 405 430 405H462L463 450L522 498L523 503L571 905Q574 929 592 929H702L770 917H1006"/>
          <path stroke="#333d4a" stroke-width="1.2" d="M727 402V456M467 449H1006M527 497H1006"/>
          <path stroke="#5b6268" stroke-width="1.2" d="M466 402H1006"/>
        </g>
      </defs>
      <use href="#half"/>
      <use href="#half" transform="matrix(-1 0 0 1 2010 0)"/>
      <path stroke="#333d4a" stroke-width="1.2" d="M1283 402V913"/>
      <path stroke="#11e83a" stroke-width="1.6" d="M727 455V953M727 957V963"/>
    </svg>
  </main>

  <aside class="dialog">
    <div class="dtitle"><span>视图截面</span><span class="close">✕</span></div>
    <div class="dbody">
      <section class="card h64"><h3>类型</h3>
        <div class="rows"><div class="dd full h26"><svg class="ti" viewBox="0 0 20 20"><path fill="#f5c331" stroke="#b8521a" d="M2 10l4-2V3l5-2 6 2v6l-4 2-2-1-5 3z"/><path fill="#e8e8e8" stroke="#666" d="M2 12l8 4 8-4v3l-8 4-8-4z"/></svg><span>一个平面</span><span class="arrow"></span></div></div>
      </section>
      <section class="card h61"><h3>名称</h3>
        <div class="rows"><div class="r h22"><span>截面名</span><div class="inp w147">截面 1</div></div></div>
      </section>
      <section class="card h191"><h3>剖切平面</h3>
        <div class="rows">
          <div class="r h25"><span>方向</span><div class="dd w141"><span>绝对坐标系</span><span class="arrow"></span></div></div>
          <div class="axes h32">
            <div class="ib s32"><svg viewBox="0 0 30 30"><path fill="#d8ecd8" stroke="#777" d="M5 8l12 5v11L5 19z"/><path stroke="#1a2fd0" stroke-width="1.2" d="M5 3v16"/><path stroke="#2aa52a" stroke-width="1.2" d="M5 19l14-6"/><path stroke="#d22" stroke-width="1.2" d="M5 19l14 8"/><text x="17" y="27" class="axt">X</text></svg></div>
            <div class="ib s32"><svg viewBox="0 0 30 30"><path fill="#e8ecd8" stroke="#777" d="M5 11l9 4 8-4-8-3z"/><path fill="#d8ecd8" stroke="#777" d="M5 11l9 4v9l-9-4z"/><path stroke="#1a2fd0" stroke-width="1.2" d="M5 3v17"/><path stroke="#2aa52a" stroke-width="1.2" d="M5 20l12-7"/><path stroke="#d22" stroke-width="1.2" d="M5 20l14 7"/><text x="18" y="15" class="axt">Y</text></svg></div>
            <div class="ib s32"><svg viewBox="0 0 30 30"><path fill="#cfe8cf" stroke="#333" d="M7 20l12-6 9 5-12 6z"/><path stroke="#1a2fd0" stroke-width="1.2" d="M5 2v20"/><path stroke="#2aa52a" stroke-width="1.2" d="M5 20l18-8"/><path stroke="#d22" stroke-width="1.2" d="M5 21l14 7"/><text x="8" y="15" class="axt">Z</text></svg></div>
          </div>
          <div class="r h32 spec">
            <span class="band">指定平面</span>
            <div class="ib s24 ml2"><svg viewBox="0 0 24 24"><path fill="#fff" stroke="#666" d="M8 4h11v11H8z"/><path fill="none" stroke="#e58a1e" stroke-width="2" d="M4 12v6h7"/><path fill="#e58a1e" d="M9 15l4 3-4 3z"/><path stroke="#222" stroke-width="2" stroke-dasharray="2 2" d="M13 20h9"/></svg></div>
            <div class="split"><span class="spm"><svg viewBox="0 0 32 32"><path fill="#e6f2e2" stroke="#333" d="M11 5l17 3v18l-17-3z"/><circle cx="11" cy="24" r="5.5" fill="none" stroke="#d22" stroke-width="1.4"/></svg></span><span class="spa"></span></div>
          </div>
          <div class="r h24"><span>反向</span><div class="ib s24"><svg viewBox="0 0 24 24"><path stroke="#222" d="M4 4l16 16"/><path stroke="#1a2fd0" stroke-width="2" d="M6 18L18 6"/><path fill="#1a2fd0" d="M3 21l2-6 4 4zM21 3l-6 2 4 4z"/></svg></div></div>
          <div class="r h32"><span>备选平面</span><div class="ib s32"><svg viewBox="0 0 32 32"><path fill="none" stroke="#1a2a80" stroke-width="1.3" d="M13 5a12 12 0 0 1 11 3M27 13a12 12 0 0 1-1 6M22 26a12 12 0 0 1-6 2M6 21a12 12 0 0 1 0-9"/><path fill="#1a2a80" d="M26 11l-4-1 3-3zM20 27l3-4 1 4zM6 10l3 3-5 0z"/><text x="10" y="12" class="nt">3</text><text x="24" y="19" class="nt">1</text><text x="8" y="27" class="nt">2</text></svg></div></div>
        </div>
      </section>
      <section class="card h141"><h3>偏置</h3>
        <div class="rows">
          <div class="r h23"><div class="slider"><span class="thumb"></span></div><div class="num w82"><span>0.00000</span></div></div>
          <div class="range h19"><span>-230.35</span><span>230.35</span></div>
          <div class="r h23"><span>步长</span><div class="num w82"><span>1.00000</span></div></div>
          <div class="r h32"><span class="lab"><svg class="tick" viewBox="0 0 14 14"><path fill="#18b02c" d="M1 7l4 2 7-8 1 1-7 11H4z"/></svg>指定变换</span><div class="ib s32"><svg viewBox="0 0 32 32"><path stroke="#1a2fd0" stroke-width="1.4" d="M7 20V5"/><path stroke="#2aa52a" stroke-width="1.4" d="M7 20l16-7"/><path stroke="#d22" stroke-width="1.4" d="M7 20l16 6"/><text x="10" y="12" class="nt">Z</text><text x="22" y="15" class="nt">Y</text><text x="22" y="30" class="nt">X</text></svg></div></div>
        </div>
      </section>
      <section class="card h23"><h3>操作</h3></section>
      <section class="card h23"><h3>显示设置</h3></section>
      <section class="card h155"><h3>截断面设置</h3>
        <div class="rows">
          <div class="r h21 start"><span class="cb on"><svg viewBox="0 0 12 12"><path fill="none" stroke="#3d4d90" stroke-width="1.6" d="M2.5 6l2.5 3 4-7"/></svg></span><span>显示截断面</span></div>
          <div class="r h25"><span>颜色选项</span><div class="dd w141"><span>指定颜色</span><span class="arrow"></span></div></div>
          <div class="r h20"><span>截断面颜色</span><span class="sw green"></span></div>
          <div class="r h22 start"><span class="cb"></span><span>显示干涉</span></div>
          <div class="r h20"><span>干涉颜色</span><span class="sw red"></span></div>
        </div>
      </section>
      <section class="card h218"><h3>截面曲线设置</h3>
        <div class="rows">
          <div class="r h20 start"><span class="cb on"><svg viewBox="0 0 12 12"><path fill="none" stroke="#3d4d90" stroke-width="1.6" d="M2.5 6l2.5 3 4-7"/></svg></span><span>显示截面曲线预览</span></div>
          <div class="r h22 start"><span class="cb"></span><span>拖动时显示曲线</span></div>
          <div class="r h25"><span>颜色选项</span><div class="dd w141"><span>指定颜色</span><span class="arrow"></span></div></div>
          <div class="r h21"><span>颜色</span><span class="sw blue"></span></div>
          <div class="r h25"><span>图层选项</span><div class="dd w141"><span>按指定的</span><span class="arrow"></span></div></div>
          <div class="r h23"><span>图层</span><div class="inp w82 right">1</div></div>
          <div class="r h32"><span>保存截面曲线的副本</span><div class="ib s32"><svg viewBox="0 0 32 32"><path fill="#e6f2e2" stroke="#333" d="M4 8l12-3v20l-12 2z"/><path fill="#e6f2e2" stroke="#333" d="M15 5l13 2v20l-13-2z"/><path fill="none" stroke="#3a5ab8" d="M7 13h6v7H7zM7 13l3-2h6"/><path fill="none" stroke="#d22" d="M15 11h6v7h-6zM15 11l3-2h6"/></svg></div></div>
        </div>
      </section>
      <section class="card h23"><h3>2D 查看器设置</h3></section>
      <section class="card h23"><h3>截面视图设置</h3></section>
    </div>
    <footer class="dfoot"><button class="btn ok">确定</button><button class="btn no">取消</button></footer>
  </aside>

  <div class="tooltip">（修改的）]</div>

  <svg class="overlay" viewBox="0 0 1645 1038" width="1645" height="1038">
    <path fill="#ff3b3b" d="M689 113L691 114L137 725L133 718Z"/>
    <path fill="#ff3b3b" d="M130 733L133 712L149 725Z"/>
    <path fill="#ff3b3b" d="M165 762L164 759L522 634L526 643Z"/>
    <path fill="#ff3b3b" d="M536 640L514 636L522 656Z"/>
    <rect class="pink" x="10" y="745" width="154" height="29"/>
    <rect class="pink" x="689.5" y="84.5" width="27" height="26"/>
    <text class="note" x="394" y="620">不显示截面曲线呢？</text>
    <g class="stamp">
      <circle class="ring" cx="70" cy="970" r="53"/>
      <circle class="ring2" cx="69" cy="972" r="49"/>
      <circle class="ring3" cx="71" cy="968" r="57"/>
      <circle cx="70" cy="932" r="6"/>
      <path class="man" d="M53 937Q64 950 72 951Q88 944 98 930M70 952L57 962M73 952Q82 960 85 970"/>
      <rect x="27" y="990" width="92" height="14"/>
      <text class="ug" x="36" y="988">UG爱好者</text>
      <text class="www" x="29" y="1001">WWW.UGSNX.COM</text>
    </g>
  </svg>

  <div class="ime">
    <span class="logo">S</span>
    <span class="zh">中</span>
    <svg viewBox="0 0 18 18"><path fill="#1f74c8" d="M12 1C17 7 14 16 6 16 4 16 2 15 0 13 6 13 11 8 12 1Z"/></svg>
    <svg viewBox="0 0 18 18"><circle cx="5" cy="6" r="2.5" fill="none" stroke="#1f74c8" stroke-width="1.6"/><path stroke="#1f74c8" stroke-width="2.4" fill="none" d="M14 7v5l-2 4"/></svg>
    <svg viewBox="0 0 18 18"><rect x="1" y="3" width="16" height="12" rx="1.5" fill="#1f74c8"/><path stroke="#fff" stroke-dasharray="1.4 1" d="M3 6h12M3 8.5h12"/><path stroke="#fff" stroke-width="1.4" d="M5 12h8"/></svg>
    <svg viewBox="0 0 18 18"><circle cx="9" cy="5" r="3.5" fill="#b2bccb"/><path fill="#b2bccb" d="M2 15c0-4 3-6 7-6s6 2 6 3H9v3z"/><rect x="10" y="12" width="6" height="5" fill="#fff" stroke="#97a3b5"/></svg>
    <svg viewBox="0 0 18 18"><path fill="#1f74c8" d="M5 2l4 2 4-2 5 4-3 3-1-1v9H4V8L3 9 0 6z"/></svg>
    <svg viewBox="0 0 18 18"><path fill="#1f74c8" d="M12 2l2 2-8 11-5 1z"/></svg>
  </div>
</div>
</body>
</html>
```
FILE: styles.css
```css
*{box-sizing:border-box}
html,body{margin:0;padding:0;background:#fff}
body{font:12px/1.2 "Open Sans","Noto Sans CJK SC",sans-serif;color:#222;text-spacing-trim:space-all}
.defs{position:absolute}
.svt{font:bold 8px "Liberation Sans",sans-serif}
.app{position:relative;width:1645px;height:1038px;overflow:hidden;display:flex;flex-direction:column;background:#fff}
.titlebar{height:26px;position:relative;flex:none}
.dash{position:absolute;left:1623px;top:17px;width:8px;height:2px;background:#555}
.edge{position:absolute;left:1644px;top:12px;width:1px;height:7px;background:#555}
.menubar{height:27px;flex:none;background:#c8d7d6;display:flex;align-items:center;padding:0 0 2px 357px;font-size:11px;position:relative}
.menu{margin-right:13px;white-space:nowrap}
.wide{letter-spacing:.38px;margin-right:11px}
.find{width:18px;height:18px;margin-right:2px;flex:none}
.menudash{position:absolute;left:1633px;top:16px;width:8px;height:2px;background:#111}
.toolbars{flex:none;display:flex;flex-direction:column;font-size:11px}
.row{display:flex;align-items:stretch}
.r32{height:32px}.r26{height:26px}.r31{height:31px}
.lead{width:338px;flex:none;display:flex;align-items:center;color:#555;font-size:13px}
.chev{margin-left:1px;font-weight:bold}
.tb{display:flex;align-items:center;border-right:1px solid #e2e2e2;border-bottom:2px solid #e6e6e6;margin-right:2px;flex:none}
.tb.flat{border-right:0;border-bottom:0}
.i{width:20px;height:20px;margin:0 1.4px;flex:none}
.i20{width:20px;height:20px;flex:none}
.i.on{background:#c8d7d6;outline:1.5px solid #c8d7d6}
.ml2{margin-left:2px}.i.ml2{margin-left:3.4px}
.ml3{margin-left:3px}
.ml4{margin-left:4px}.i.ml4{margin-left:5.4px}
.ml6{margin-left:6px}.i.ml6{margin-left:7.4px}
.mln{margin-left:-11px}
.pr1{margin-right:1px}.pr2{margin-right:2px}.pr3{margin-right:3px}
.c{width:13px;height:100%;flex:none;position:relative}
.c::after{content:"";position:absolute;left:3px;top:50%;margin-top:-3px;border:3.5px solid transparent;border-top:4px solid #111;border-bottom:0}
.c.down::after{margin-top:1px}
.c10{width:10px}
.c10::after{left:1px}
.s{width:4px;flex:none;align-self:stretch;margin:3px 0;position:relative}
.s::after{content:"";position:absolute;left:1.5px;top:0;bottom:0;width:1px;background:#d8d8d8}
.s6{width:6px}.s14{width:14px}
.g{width:6px;flex:none;align-self:stretch;margin:4px 0;background:repeating-linear-gradient(#a8a8a8 0 2px,transparent 2px 4px) 1px 0/3px 100% no-repeat}
.tm{margin-left:2px;white-space:nowrap}
.tm.noml{margin-left:4px}
.sel{width:48px;height:20px;border:1px solid #999;background:#fff;display:flex;justify-content:space-between;align-items:center;padding:0 7px 0 3px;flex:none;font-size:13px}
.arrow{width:0;height:0;border:5px solid transparent;border-top:5px solid #111;border-bottom:0;flex:none}
.findbox{width:124px;height:20px;border:1px solid #aaa;flex:none;display:flex;justify-content:space-between;align-items:center;padding:0 2px;background:#fff;font-size:12px}
.find2{width:16px;height:16px}
.rule{height:2px;flex:none;background:#8d9797}
.viewbar{height:21px;flex:none;display:flex;justify-content:flex-end;align-items:center;gap:4px;margin-right:-2px}
.vi{width:16px;height:16px}
.viewport{flex:1;background:linear-gradient(#b5b5b5,#e6e7e9 85%)}
.model{display:block}

.dialog{position:absolute;left:10px;top:8px;width:328px;bottom:0;background:#e6e6e6;border-left:1px solid #a4a4a4;border-right:1px solid #c8c8c8;display:flex;flex-direction:column}
.dtitle{height:24px;flex:none;background:#5f8781;color:#e4efec;display:flex;justify-content:space-between;align-items:center;padding:0 4px 0 31px;font-size:13px}
.close{font-size:19px;line-height:24px;color:#fff;font-family:"DejaVu Sans",sans-serif}
.dbody{display:flex;flex-direction:column;gap:4px;padding:4px 5px 0}
.card{background:#fff;box-shadow:0 1px 1px #b8b8b8;padding:0 9px;flex:none;width:316px}
.card h3{margin:0 0 0 -2px;height:26px;line-height:26px;font-size:14px;font-weight:normal;color:#3f96c6}
.h64{height:64px}.h61{height:61px}.h191{height:191px}.h141{height:141px}.h23{height:23px}.h155{height:155px}.h218{height:218px}
.h19{height:19px}.h20{height:20px}.h21{height:21px}.h22{height:22px}.h24{height:24px}.h25{height:25px}.h26{height:26px}.h32{height:32px}
.rows{display:flex;flex-direction:column;gap:2px;padding-top:4px}
.r{display:flex;justify-content:space-between;align-items:center;flex:none}
.r>span:first-child{padding-top:2px}
.r>span.cb,.r>span.band{padding-top:0}
.r.start{justify-content:flex-start;gap:5px}
.r.start>span+span{padding-top:2px}
.dd{display:flex;align-items:center;border:1px solid #a8a8a8;padding:2px 5px 0 4px;background:#fff;height:100%;gap:2px;flex:none}
.dd.h26{height:26px}
.dd .arrow{margin:-2px 0 0 auto}
.ti{width:18px;height:18px;margin-top:-2px}
.w141{width:141px}.w147{width:147px;height:22px}.w82{width:82px}
.inp{border:1px solid #aaa;height:100%;display:flex;align-items:center;padding:2px 4px 0;background:#fff;flex:none}
.inp.right{justify-content:flex-end;padding:0 7px 0 0;font:15px "Liberation Mono",monospace}
.num{border:1px solid #aaa;height:100%;overflow:hidden;background:#fff;padding-left:21px;flex:none;font:15.5px/23px "Liberation Mono",monospace;color:#333}
.num span{display:block;white-space:nowrap}
.axes{display:flex;justify-content:center;gap:2px;flex:none;padding-right:1px}
.ib{border:1px solid #a8a8a8;background:#fff;flex:none;display:flex}
.ib svg{width:100%;height:100%}
.s32{width:32px;height:32px}.s24{width:24px;height:24px}
.axt{font:bold 15px "Liberation Sans",sans-serif;fill:#111}
.nt{font:bold 10px "Liberation Sans",sans-serif;fill:#222}
.spec{justify-content:flex-start}
.band{width:221px;height:32px;background:#fbd46f;display:flex;align-items:center}
.split{margin-left:2px;width:49px;height:32px;display:flex;border:1px solid #fbd46f;background:#fbe9ad}
.spm{width:31px;background:#fbe2a0;display:flex}
.spm svg{width:100%;height:100%}
.spa{flex:1;position:relative;border-left:1px solid #fbd46f}
.spa::after{content:"";position:absolute;left:5px;top:13px;border:3px solid transparent;border-top:4px solid #2b86c8;border-bottom:0}
.slider{width:198px;height:5px;margin:4px 0 0 8px;background:#b0b0b0;position:relative}
.thumb{position:absolute;left:94px;top:-9px;width:11px;height:22px;background:#a8c4c0;border:1px solid #4a5a58}
.range{display:flex;justify-content:space-between;width:208px;margin-left:6px;align-items:center;flex:none}
.lab{display:flex;align-items:center;gap:3px;padding-left:2px}
.tick{width:14px;height:14px;margin-left:1px}
.cb{width:13px;height:13px;border:1px solid #888;background:linear-gradient(135deg,#ddd,#fff);box-shadow:inset 0 0 0 1px #f4f4f4;flex:none;display:flex}
.sw{width:72px;height:14px;border:1px solid #777;align-self:flex-start;flex:none}
.green{background:#ccff8c}.red{background:#cc3333}.blue{background:#0000ee}
.dfoot{margin-top:auto;height:32px;display:flex;justify-content:flex-end;gap:5px;padding:0 15px 7px 0;flex:none}
.btn{width:54px;height:25px;font:12px "Noto Sans CJK SC",sans-serif;color:#222;padding:0}
.ok{background:#97c8e4;border:1px solid #5ca6d0}
.no{background:#c4c4c8;border:1px solid #aaa}
.tooltip{position:absolute;left:-1px;top:18px;width:70px;height:21px;background:#ffffe1;border:1px solid #999;border-right:1px solid #444;border-bottom:1px solid #444;font-size:12px;line-height:19px;white-space:nowrap;overflow:hidden;padding-left:0}
.overlay{position:absolute;left:0;top:0;pointer-events:none}
.pink{fill:none;stroke:#f030f0;stroke-width:3}
.note{font:15.3px "Noto Sans CJK TC",sans-serif;fill:#f23c3c}
.stamp{fill:#f00a0a}
.ring{fill:none;stroke:#f00a0a;stroke-width:8;stroke-dasharray:70 3 40 2 60 4 90 3 30 2}
.ring2{fill:none;stroke:#f00a0a;stroke-width:3;stroke-dasharray:14 9 30 5 8 12}
.ring3{fill:none;stroke:#f00a0a;stroke-width:1.6;stroke-dasharray:6 9 20 14}
.man{fill:none;stroke:#f00a0a;stroke-width:7;stroke-linecap:round}
.ug{font:bold 19px "Liberation Sans","Noto Sans CJK SC",sans-serif;fill:#f00a0a}
.www{font:bold 10.2px "Liberation Sans",sans-serif;fill:#fff}
.ime{position:absolute;left:1498px;top:986px;width:147px;height:23px;background:#fbfdff;border-top:1px solid #b9cadb;border-bottom:1px solid #b9cadb;display:flex;align-items:center;padding-left:9px;gap:4.8px;color:#1f74c8}
.ime svg{width:17px;height:17px;flex:none}
.logo{position:absolute;left:-24px;top:-3px;width:26px;height:26px;border-radius:3px;background:linear-gradient(#ff7a30,#f04a10);color:#fff;font:bold 24px/26px "Liberation Sans",sans-serif;text-align:center;transform:rotate(-10deg)}
.zh{font-size:16px;font-weight:bold;width:17px;flex:none;line-height:1}
```
